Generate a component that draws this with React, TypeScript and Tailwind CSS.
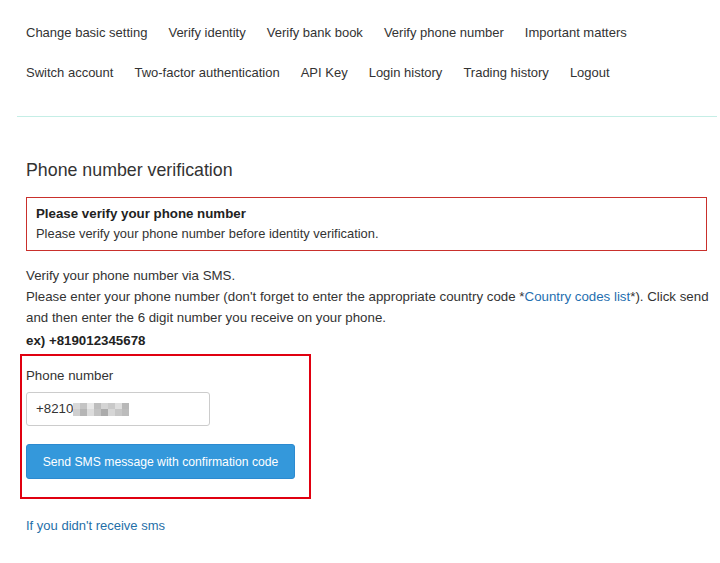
const navRows = [
  ["Change basic setting", "Verify identity", "Verify bank book", "Verify phone number", "Important matters"],
  ["Switch account", "Two-factor authentication", "API Key", "Login history", "Trading history", "Logout"],
];

// pixelated (blurred) part of the phone number
const mosaic = [
  ["#d9d9d9", "#c4c4c4", "#e8e8e8", "#bdbdbd", "#d4d4d4", "#c9c9c9", "#dedede", "#b8b8b8"],
  ["#cfcfcf", "#b5b5b5", "#dcdcdc", "#c2c2c2", "#ababab", "#d6d6d6", "#c6c6c6", "#bcbcbc"],
];

export default function App() {
  return (
    <div className="min-h-screen bg-white text-[13.3px] leading-5 text-[#333] font-['Liberation_Sans',Arial,sans-serif]">
      <nav className="px-[26px] pt-[23px]">
        {navRows.map((row, i) => (
          <ul key={i} className={`flex gap-x-[21px] ${i > 0 ? "mt-5" : ""}`}>
            {row.map((item) => (
              <li key={item} className="whitespace-nowrap text-[13px]">
                {item}
              </li>
            ))}
          </ul>
        ))}
      </nav>

      <div className="ml-[17px] mt-[33px] w-[700px] h-px bg-[#c5eee6]" />

      <main className="px-[26px] pt-[41px]">
        <h2 className="text-[17.8px] leading-6 text-[#333]">Phone number verification</h2>

        <div className="mt-[15px] w-[681px] border border-[#c9302c] pl-[9px] pr-3 pt-[6px] pb-[6px]">
          <p className="font-bold text-[#222]">Please verify your phone number</p>
          <p className="text-[12.9px]">Please verify your phone number before identity verification.</p>
        </div>

        <div className="mt-[14px] leading-[21px]">
          <p>Verify your phone number via SMS.</p>
          <p className="w-[690px]">
            Please enter your phone number (don't forget to enter the appropriate country code *
            <a className="text-[#1f6fb0]">Country codes list</a>*). Click send and then enter the 6 digit
            number you receive on your phone.
          </p>
        </div>
        <p className="mt-[3px] font-bold text-[#222]">ex) +819012345678</p>

        <div className="-ml-[6px] mt-[3px] w-[291px] border-2 border-[#e00010] pl-1 pt-[10px] pb-[18px]">
          <label className="block">Phone number</label>
          <div className="mt-[6px] flex h-[34px] w-[184px] items-center rounded-[3px] border border-[#ccc] pl-[9px]">
            <span>+8210</span>
            <span className="flex flex-col">
              {mosaic.map((r, i) => (
                <span key={i} className="flex">
                  {r.map((c, j) => (
                    <span key={j} className="h-[6.5px] w-[7px]" style={{ backgroundColor: c }} />
                  ))}
                </span>
              ))}
            </span>
          </div>
          <button className="mt-[18px] h-[35px] w-[269px] whitespace-nowrap rounded-[3px] border border-[#2c8ad0] bg-[#3498db] text-center text-[12.2px] text-white">
            Send SMS message with confirmation code
          </button>
        </div>

        <a className="mt-[17px] block text-[#1f6fa8] text-[13px]">If you didn't receive sms</a>
      </main>
    </div>
  );
}
